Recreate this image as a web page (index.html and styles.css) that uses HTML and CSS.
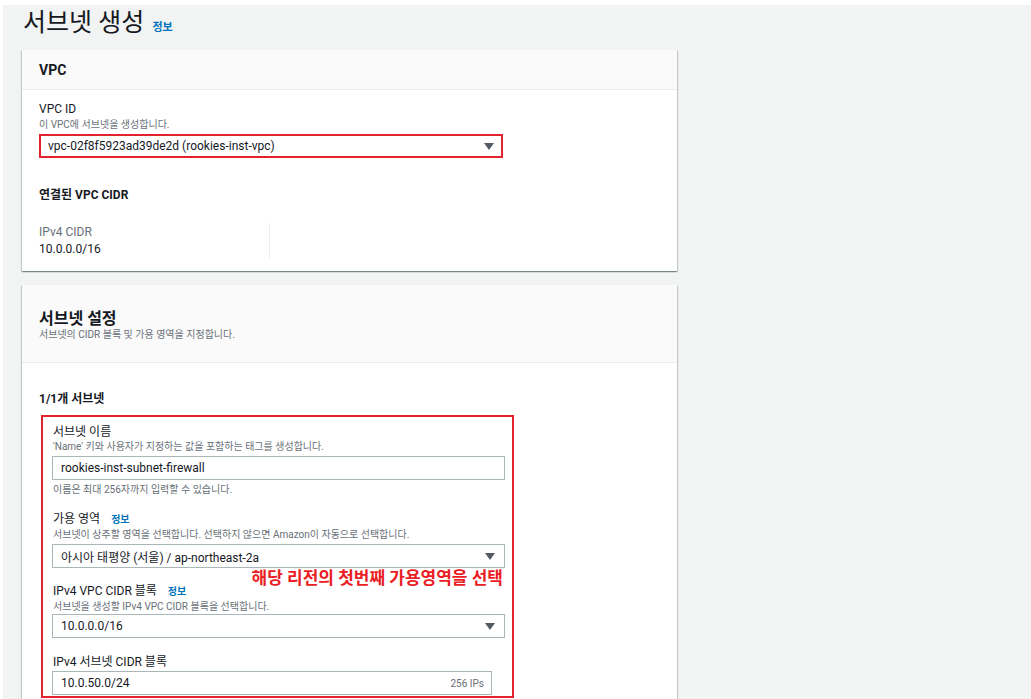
FILE: index.html
```html
<!DOCTYPE html>
<html lang="ko">

<head>
  <meta charset="UTF-8">
  <title>서브넷 생성</title>
  <link rel="stylesheet" href="styles.css">
</head>

<body>
  <div class="page">
    <h1 class="page-title">서브넷 생성 <a href="#" class="info-link">정보</a></h1>

    <div class="card">
      <div class="card-header">
        <h2 class="card-title">VPC</h2>
      </div>
      <div class="card-body vpc-body">
        <p class="field-label">VPC ID</p>
        <p class="field-desc">이 VPC에 서브넷을 생성합니다.</p>
        <div class="select select-red">
          <span>vpc-02f8f5923ad39de2d (rookies-inst-vpc)</span>
          <span class="caret"></span>
        </div>

        <h3 class="sub-title">연결된 VPC CIDR</h3>
        <div class="cidr-row">
          <div class="cidr-col">
            <p class="cidr-key">IPv4 CIDR</p>
            <p class="cidr-value">10.0.0.0/16</p>
          </div>
        </div>
      </div>
    </div>

    <div class="card">
      <div class="card-header card-header-big">
        <h2 class="card-title-big">서브넷 설정</h2>
        <p class="field-desc">서브넷의 CIDR 블록 및 가용 영역을 지정합니다.</p>
      </div>
      <div class="card-body subnet-body">
        <h3 class="sub-title">1/1개 서브넷</h3>

        <div class="red-box">
          <p class="field-label">서브넷 이름</p>
          <p class="field-desc">'Name' 키와 사용자가 지정하는 값을 포함하는 태그를 생성합니다.</p>
          <div class="input">rookies-inst-subnet-firewall</div>
          <p class="field-desc hint">이름은 최대 256자까지 입력할 수 있습니다.</p>

          <p class="field-label gap">가용 영역 <a href="#" class="info-link">정보</a></p>
          <p class="field-desc">서브넷이 상주할 영역을 선택합니다. 선택하지 않으면 Amazon이 자동으로 선택합니다.</p>
          <div class="select">
            <span>아시아 태평양 (서울) / ap-northeast-2a</span>
            <span class="caret"></span>
          </div>

          <p class="field-label gap gap-mid">IPv4 VPC CIDR 블록 <a href="#" class="info-link">정보</a></p>
          <p class="field-desc">서브넷을 생성할 IPv4 VPC CIDR 블록을 선택합니다.</p>
          <div class="select select-tight">
            <span>10.0.0.0/16</span>
            <span class="caret"></span>
          </div>

          <p class="field-label gap gap-last">IPv4 서브넷 CIDR 블록</p>
          <div class="input input-short">
            <span>10.0.50.0/24</span>
            <span class="ips">256 IPs</span>
          </div>

          <p class="note">해당 리전의 첫번째 가용영역을 선택</p>
        </div>
      </div>
    </div>
  </div>
</body>

</html>
```

FILE: styles.css
```css
* {
  margin: 0;
  padding: 0;
  box-sizing: border-box;
}

body {
  font-family: Roboto, "Noto Sans CJK KR", sans-serif;
  background: #ffffff;
  color: #16191f;
  height: 699px;
  overflow: hidden;
}

.page {
  margin: 5px 0 0 3px;
  padding: 0 19px 40px 19px;
  background: #f2f3f3;
  min-height: 694px;
}

.page-title {
  font-size: 25px;
  font-weight: 400;
  line-height: 36px;
  height: 45px;
  padding: 0 0 0 1px;
  color: #16191f;
}

.info-link {
  font-size: 11px;
  font-weight: 700;
  color: #0073bb;
  text-decoration: none;
  margin-left: 2px;
}

.card {
  width: 655px;
  background: #ffffff;
  box-shadow: 0 1px 1px 0 rgba(0, 28, 36, 0.3), 1px 1px 1px 0 rgba(0, 28, 36, 0.15), -1px 1px 1px 0 rgba(0, 28, 36, 0.15);
  margin-bottom: 14px;
}

.card-header {
  height: 40px;
  display: flex;
  align-items: center;
  padding: 0 17px;
  background: #fafafa;
  border-bottom: 1px solid #eaeded;
}

.card-title {
  font-size: 14px;
  font-weight: 700;
}

.card-header-big {
  height: 78px;
  display: block;
  padding: 23px 17px 0 17px;
}

.card-title-big {
  font-size: 16px;
  font-weight: 700;
  line-height: 22px;
  margin-bottom: -3px;
}

.card-body {
  padding: 11px 17px 13px 17px;
}

.field-label {
  font-size: 12px;
  line-height: 16px;
  color: #16191f;
}

.field-label .info-link {
  font-size: 10px;
  margin-left: 8px;
}

.field-desc {
  font-size: 10px;
  line-height: 14px;
  color: #687078;
  margin-top: 1px;
}

.select,
.input {
  width: 453px;
  height: 24px;
  border: 1px solid #aab7b8;
  display: flex;
  align-items: center;
  justify-content: space-between;
  padding: 0 9px 0 8px;
  font-size: 12px;
  color: #16191f;
  background: #ffffff;
  margin-top: 2px;
}

.select-red {
  width: 464px;
  margin-top: 2px;
  border: 2px solid #e3222f;
  padding: 0 7px 0 7px;
}

.caret {
  width: 0;
  height: 0;
  border-left: 5px solid transparent;
  border-right: 5px solid transparent;
  border-top: 7px solid #545b64;
}

.sub-title {
  font-size: 12px;
  font-weight: 700;
  line-height: 16px;
  margin-top: 29px;
}

.cidr-row {
  display: flex;
  margin-top: 20px;
}

.cidr-col {
  width: 231px;
  padding-top: 1px;
  border-right: 1px solid #eaeded;
  height: 35px;
}

.cidr-key {
  font-size: 12px;
  line-height: 16px;
  color: #687078;
}

.cidr-value {
  font-size: 12px;
  line-height: 16px;
  margin-top: 1px;
}

.subnet-body {
  padding: 28px 17px 20px 17px;
}

.subnet-body .sub-title {
  margin-top: 0;
}

.red-box {
  position: relative;
  width: 473px;
  margin: 8px 0 0 2px;
  border: 2px solid #e3222f;
  padding: 7px 6px 1px 9px;
}

.red-box .field-label {
  padding-left: 1px;
}

.red-box .field-desc {
  padding-left: 1px;
  margin-top: 0;
}

.red-box .field-desc.hint {
  margin-top: 3px;
}

.field-label.gap {
  margin-top: 14px;
}

.field-label.gap-mid {
  margin-top: 15px;
}

.field-label.gap-last {
  margin-top: 16px;
}

.select-tight {
  margin-top: 0;
}

.input-short {
  width: 440px;
  margin-top: 1px;
}

.ips {
  font-size: 10px;
  color: #687078;
  margin-right: -2px;
}

.note {
  position: absolute;
  right: 9px;
  top: 150px;
  font-size: 17px;
  font-weight: 700;
  line-height: 22px;
  color: #ea1c24;
}
```
